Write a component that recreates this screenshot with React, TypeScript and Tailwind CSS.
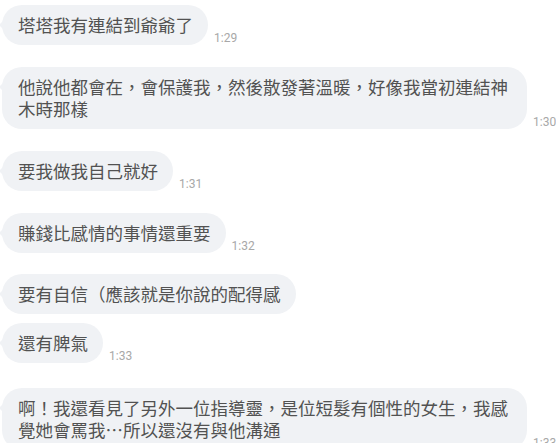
type Msg = { text: string; time?: string; gap: string };

const messages: Msg[] = [
  { text: '塔塔我有連結到爺爺了', time: '1:29', gap: 'mt-[5px]' },
  { text: '他說他都會在，會保護我，然後散發著溫暖，好像我當初連結神木時那樣', time: '1:30', gap: 'mt-[22px]' },
  { text: '要我做我自己就好', time: '1:31', gap: 'mt-[22px]' },
  { text: '賺錢比感情的事情還重要', time: '1:32', gap: 'mt-[22px]' },
  { text: '要有自信（應該就是你說的配得感', gap: 'mt-[21px]' },
  { text: '還有脾氣', time: '1:33', gap: 'mt-[9px]' },
  { text: '啊！我還看見了另外一位指導靈，是位短髮有個性的女生，我感覺她會罵我…所以還沒有與他溝通', time: '1:33', gap: 'mt-[25px]' },
];

const Bubble = ({ text }: { text: string }) => {
  return (
    <div className="relative shrink-0 max-w-[525px] ml-[2px] rounded-[20px] bg-[#f0f2f5] pl-[16px] pr-[15px] py-[9px] text-[17.5px] leading-[22px] text-[#525252]" style={{ fontFamily: '"Noto Sans CJK TC", "Noto Sans", sans-serif' }}>
      <span className="absolute left-[-3px] top-[15px] w-0 h-0 border-y-[5px] border-y-transparent border-r-[5px] border-r-[#f0f2f5]"></span>
      {text}
    </div>
  )
}

const App = () => {
  return (
    <div className="w-[556px] h-[443px] overflow-hidden bg-white">
      <div className="flex flex-col">
        {messages.map((m, i) => (
          <div key={i} className={`flex items-end ${m.gap}`}>
            <Bubble text={m.text} />
            {m.time && (
              <span className="shrink-0 ml-[6px] mb-[-1px] text-[12px] leading-[16px] text-[#a8a8a8]" style={{ fontFamily: 'Roboto, "Liberation Sans", sans-serif' }}>
                {m.time}
              </span>
            )}
          </div>
        ))}
      </div>
    </div>
  )
}

export default App
